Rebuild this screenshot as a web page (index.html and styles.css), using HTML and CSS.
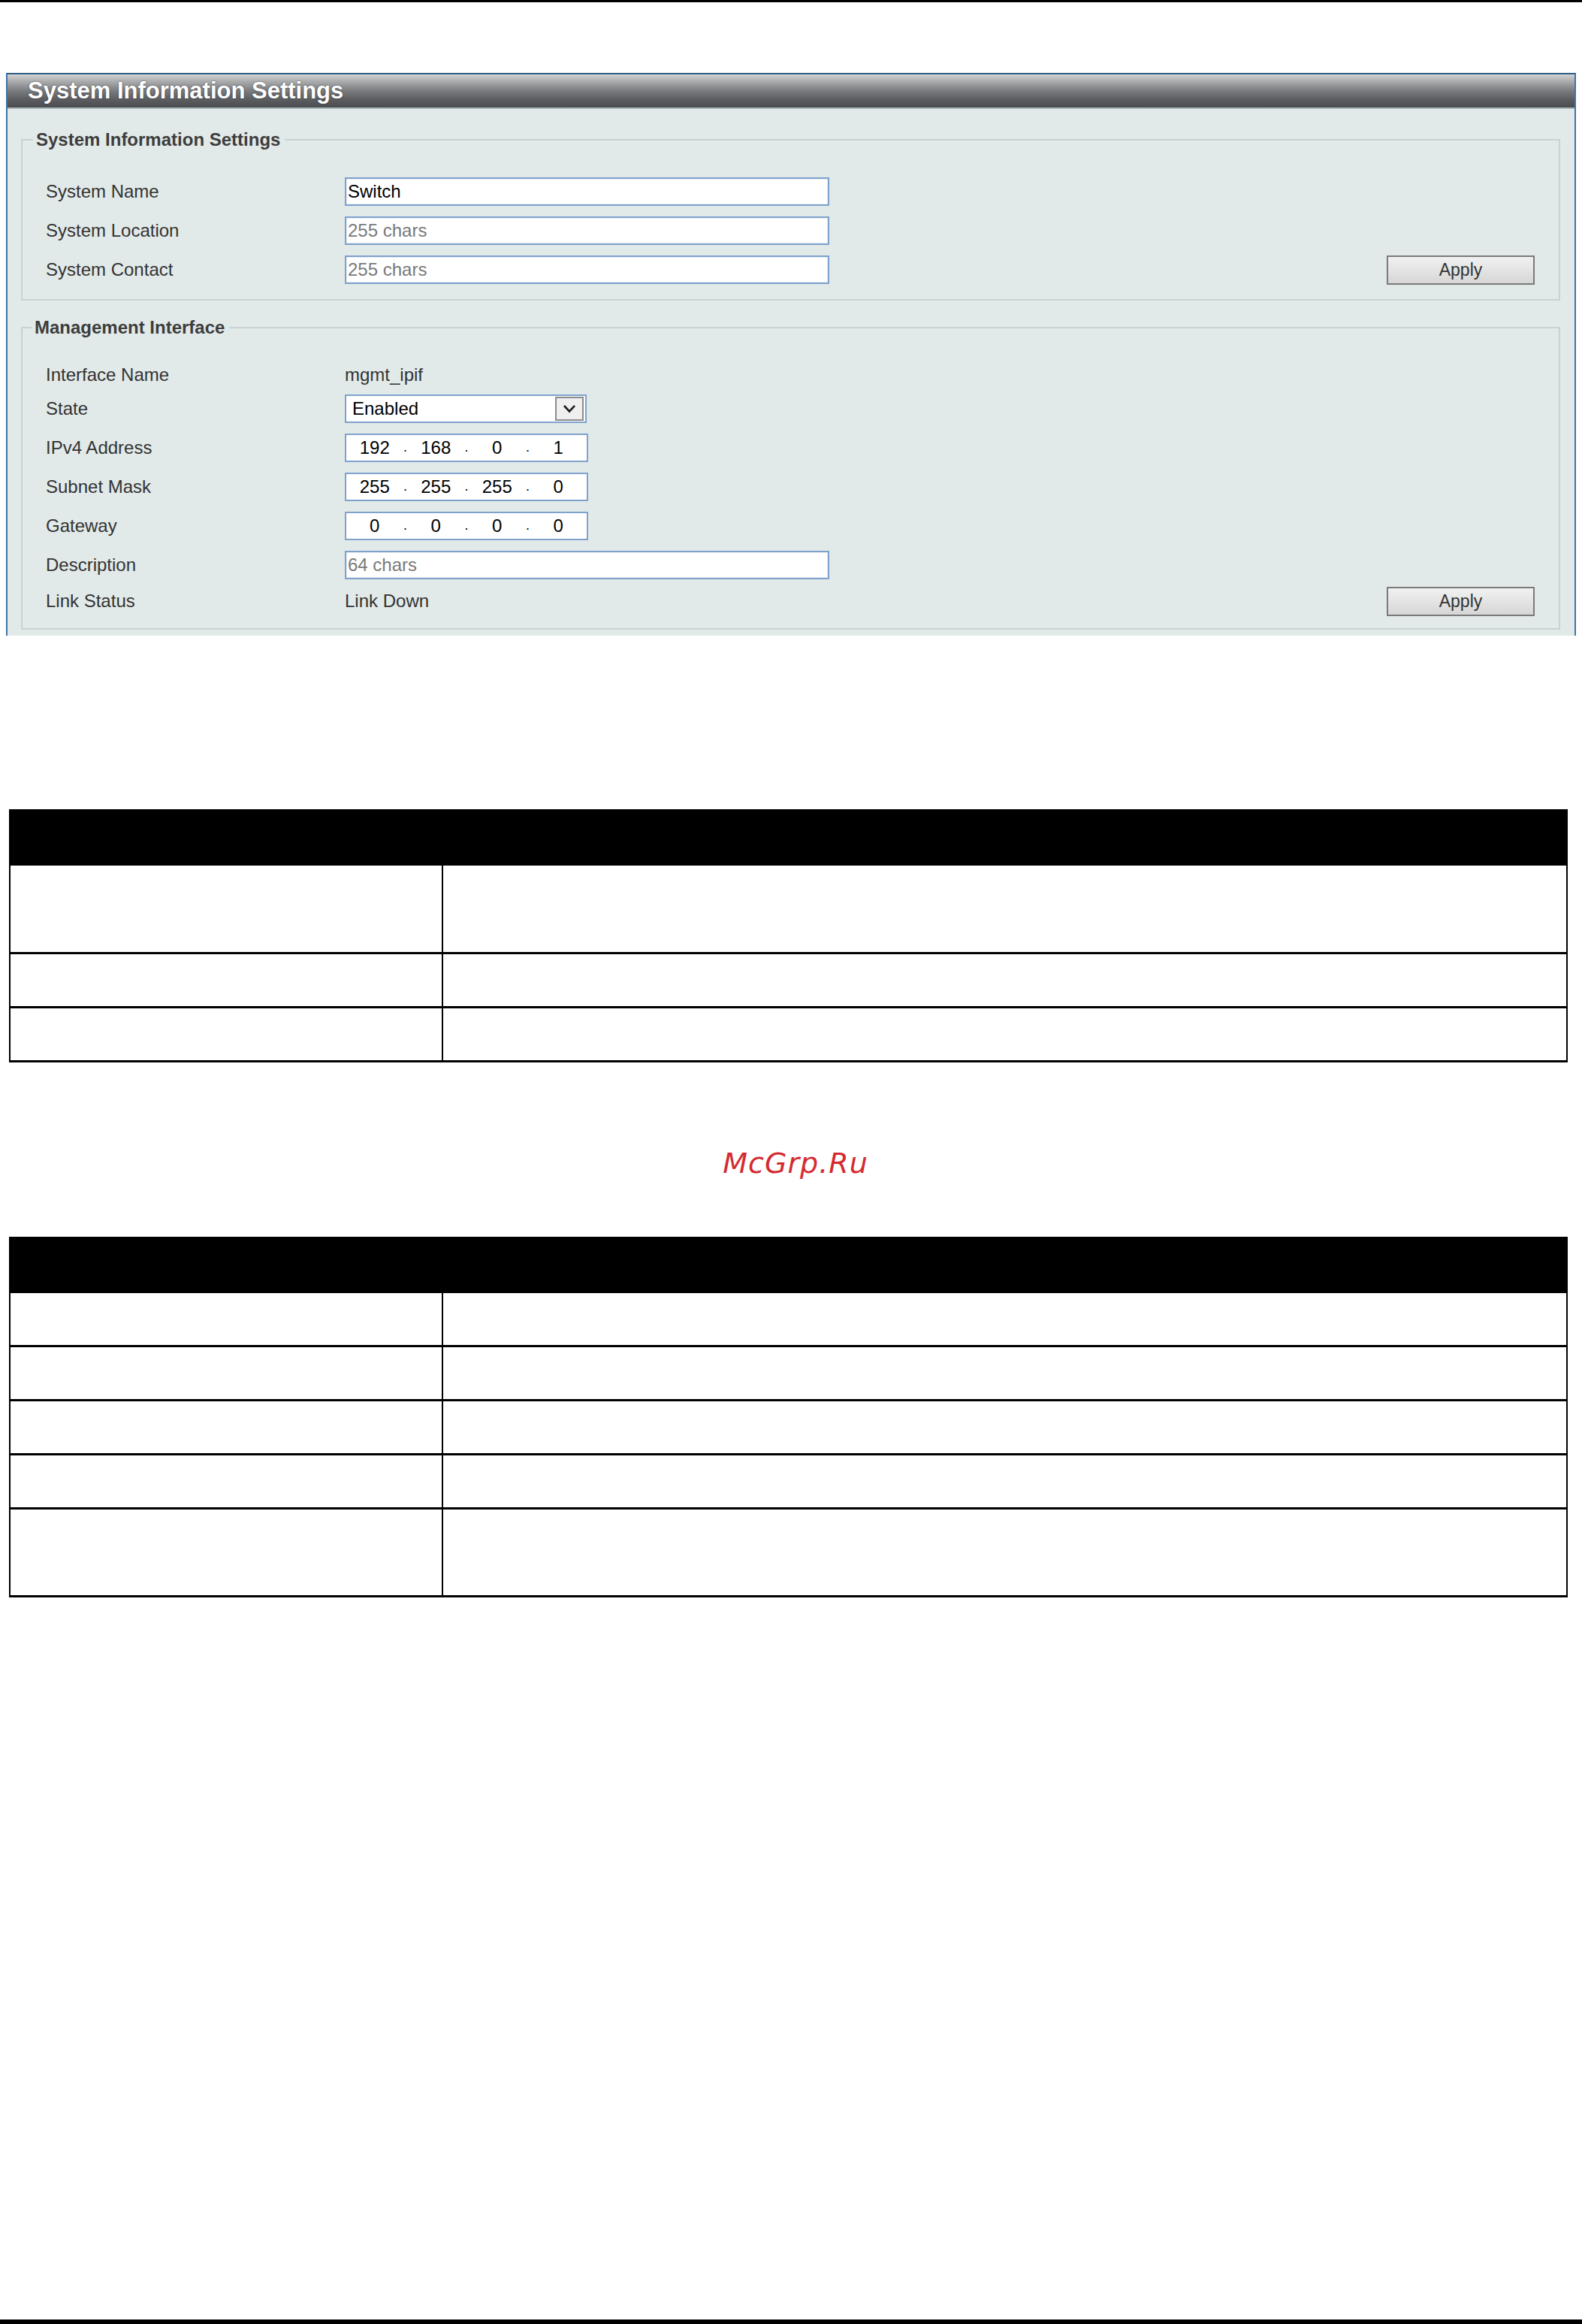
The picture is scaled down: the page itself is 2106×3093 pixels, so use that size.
FILE: index.html
```html
<!DOCTYPE html>
<html lang="en">
<head>
<meta charset="utf-8">
<title>System Information Settings</title>
<link rel="stylesheet" href="styles.css">
</head>
<body>
<div class="page">
  <div class="top-rule"></div>

  <section class="panel">
    <div class="panel-title">System Information Settings</div>

    <fieldset class="group group-sys">
      <legend>System Information Settings</legend>
      <div class="row">
        <span class="label">System Name</span>
        <input class="text-in" type="text" value="Switch">
      </div>
      <div class="row">
        <span class="label">System Location</span>
        <input class="text-in" type="text" placeholder="255 chars">
      </div>
      <div class="row">
        <span class="label">System Contact</span>
        <input class="text-in" type="text" placeholder="255 chars">
        <button class="apply" type="button">Apply</button>
      </div>
    </fieldset>

    <fieldset class="group group-mgmt">
      <legend>Management Interface</legend>
      <div class="row row-text">
        <span class="label">Interface Name</span>
        <span class="value">mgmt_ipif</span>
      </div>
      <div class="row row-select">
        <span class="label">State</span>
        <div class="select">
          <span class="select-text">Enabled</span>
          <span class="select-arrow">
            <svg width="24" height="20" viewBox="0 0 24 20"><path d="M5 6 L12 13.5 L19 6" fill="none" stroke="#1e1e1e" stroke-width="2.6"/></svg>
          </span>
        </div>
      </div>
      <div class="row">
        <span class="label">IPv4 Address</span>
        <div class="ip">
          <span class="oct">192</span><span class="dot">.</span><span class="oct">168</span><span class="dot">.</span><span class="oct">0</span><span class="dot">.</span><span class="oct">1</span>
        </div>
      </div>
      <div class="row">
        <span class="label">Subnet Mask</span>
        <div class="ip">
          <span class="oct">255</span><span class="dot">.</span><span class="oct">255</span><span class="dot">.</span><span class="oct">255</span><span class="dot">.</span><span class="oct">0</span>
        </div>
      </div>
      <div class="row">
        <span class="label">Gateway</span>
        <div class="ip">
          <span class="oct">0</span><span class="dot">.</span><span class="oct">0</span><span class="dot">.</span><span class="oct">0</span><span class="dot">.</span><span class="oct">0</span>
        </div>
      </div>
      <div class="row">
        <span class="label">Description</span>
        <input class="text-in" type="text" placeholder="64 chars">
      </div>
      <div class="row row-last">
        <span class="label">Link Status</span>
        <span class="value">Link Down</span>
        <button class="apply" type="button">Apply</button>
      </div>
    </fieldset>
  </section>

  <table class="doc-table table-one">
    <thead>
      <tr><th class="c1"></th><th class="c2"></th></tr>
    </thead>
    <tbody>
      <tr class="tall"><td></td><td></td></tr>
      <tr class="std"><td></td><td></td></tr>
      <tr class="std"><td></td><td></td></tr>
    </tbody>
  </table>

  <div class="watermark">McGrp.Ru</div>

  <table class="doc-table table-two">
    <thead>
      <tr><th class="c1"></th><th class="c2"></th></tr>
    </thead>
    <tbody>
      <tr class="std"><td></td><td></td></tr>
      <tr class="std"><td></td><td></td></tr>
      <tr class="std"><td></td><td></td></tr>
      <tr class="std"><td></td><td></td></tr>
      <tr class="tall"><td></td><td></td></tr>
    </tbody>
  </table>

  <div class="bottom-rule"></div>
</div>
</body>
</html>
```

FILE: styles.css
```css
* { box-sizing: border-box; }

html, body {
  margin: 0;
  padding: 0;
  background: #ffffff;
}

body {
  font-family: "Liberation Sans", Arial, sans-serif;
  color: #333333;
}

.page {
  min-height: 3093px;
  display: flex;
  flex-direction: column;
}

.top-rule {
  height: 3px;
  background: #000000;
}

/* ---------- panel ---------- */
.panel {
  margin: 94px 0 0 8px;
  width: 2090px;
  height: 749px;
  background: #e2eae9;
  border-top: 2px solid #2e5d86;
  border-left: 2px solid #3f73a6;
  border-right: 2px solid #3f73a6;
}

.panel-title {
  height: 46px;
  padding-left: 27px;
  font-size: 31px;
  font-weight: bold;
  line-height: 44px;
  color: #ffffff;
  text-shadow: 0 0 2px rgba(0,0,0,0.6);
  background: linear-gradient(to bottom, #d4d4d4 0%, #a9aaac 22%, #7a7b7e 50%, #5d5e61 75%, #4b4c4f 100%);
  border-bottom: 2px solid #aab6b8;
}

.group {
  margin: 27px 19px 0 18px;
  padding: 29px 32px 13px 0;
  border: 2px solid #c6d2d4;
  min-width: 0;
}

.group-mgmt {
  margin-top: 22px;
  padding-top: 30px;
  padding-bottom: 14px;
}

.group legend {
  margin-left: 14px;
  padding: 0 6px 0 4px;
  font-size: 24px;
  font-weight: bold;
  line-height: 28px;
  color: #3d3d3d;
}

.group-mgmt legend {
  margin-left: 12px;
}

.row {
  display: flex;
  align-items: center;
  height: 52px;
  padding-left: 31px;
  font-size: 24px;
}

.row-text { height: 38px; }
.row-last { height: 44px; }

.label {
  width: 398px;
  flex: none;
  color: #333333;
}

.value {
  color: #333333;
}

.text-in {
  width: 645px;
  height: 38px;
  padding: 0 2px;
  border: 2px solid #7ea2cc;
  background: #ffffff;
  font-family: "Liberation Sans", Arial, sans-serif;
  font-size: 24px;
  color: #000000;
  outline: none;
  box-shadow: inset 0 0 0 1px #e8eef5;
}

.text-in::placeholder {
  color: #7a7a7a;
  opacity: 1;
}

/* select */
.select {
  width: 322px;
  height: 38px;
  display: flex;
  align-items: center;
  border: 2px solid #7ea2cc;
  background: #ffffff;
  padding: 0 2px 0 8px;
}

.select-text {
  flex: 1;
  color: #000000;
}

.select-arrow {
  width: 38px;
  height: 32px;
  display: flex;
  align-items: center;
  justify-content: center;
  border: 2px solid #8c8c8c;
  background: #efefef;
}

/* ip boxes */
.ip {
  width: 324px;
  height: 38px;
  display: flex;
  align-items: center;
  border: 2px solid #7ea2cc;
  background: #ffffff;
  padding: 0 4px;
  color: #000000;
}

.oct {
  width: 68px;
  text-align: center;
}

.dot {
  width: 14px;
  text-align: center;
  font-size: 18px;
  position: relative;
  top: -1px;
}

/* apply button */
.apply {
  margin-left: auto;
  width: 197px;
  height: 39px;
  border: 2px solid #7a7a7a;
  background: linear-gradient(to bottom, #f1f1f1 0%, #e4e4e4 50%, #d6d6d6 100%);
  font-family: "Liberation Sans", Arial, sans-serif;
  font-size: 23px;
  color: #333333;
  padding: 0;
}

/* ---------- tables ---------- */
.doc-table {
  margin-left: 12px;
  width: 2075px;
  border-collapse: collapse;
  table-layout: fixed;
}

.table-one { margin-top: 231px; }
.table-two { margin-top: 68px; }

.doc-table th {
  background: #000000;
  height: 73px;
  border: 2px solid #000000;
  padding: 0;
}

.doc-table th.c1 { width: 576px; }

.doc-table td {
  border-left: 2px solid #000000;
  border-right: 2px solid #000000;
  border-bottom: 3px solid #000000;
  padding: 0;
}

.doc-table tr.std td { height: 72px; }
.doc-table tr.tall td { height: 117px; }

.watermark {
  margin-top: 104px;
  height: 60px;
  line-height: 60px;
  text-align: center;
  font-family: "DejaVu Sans", sans-serif;
  font-style: italic;
  font-size: 38px;
  color: #d42a30;
  letter-spacing: 1px;
  padding-left: 12px;
}

.bottom-rule {
  margin-top: auto;
  height: 6px;
  background: #000000;
}
```
